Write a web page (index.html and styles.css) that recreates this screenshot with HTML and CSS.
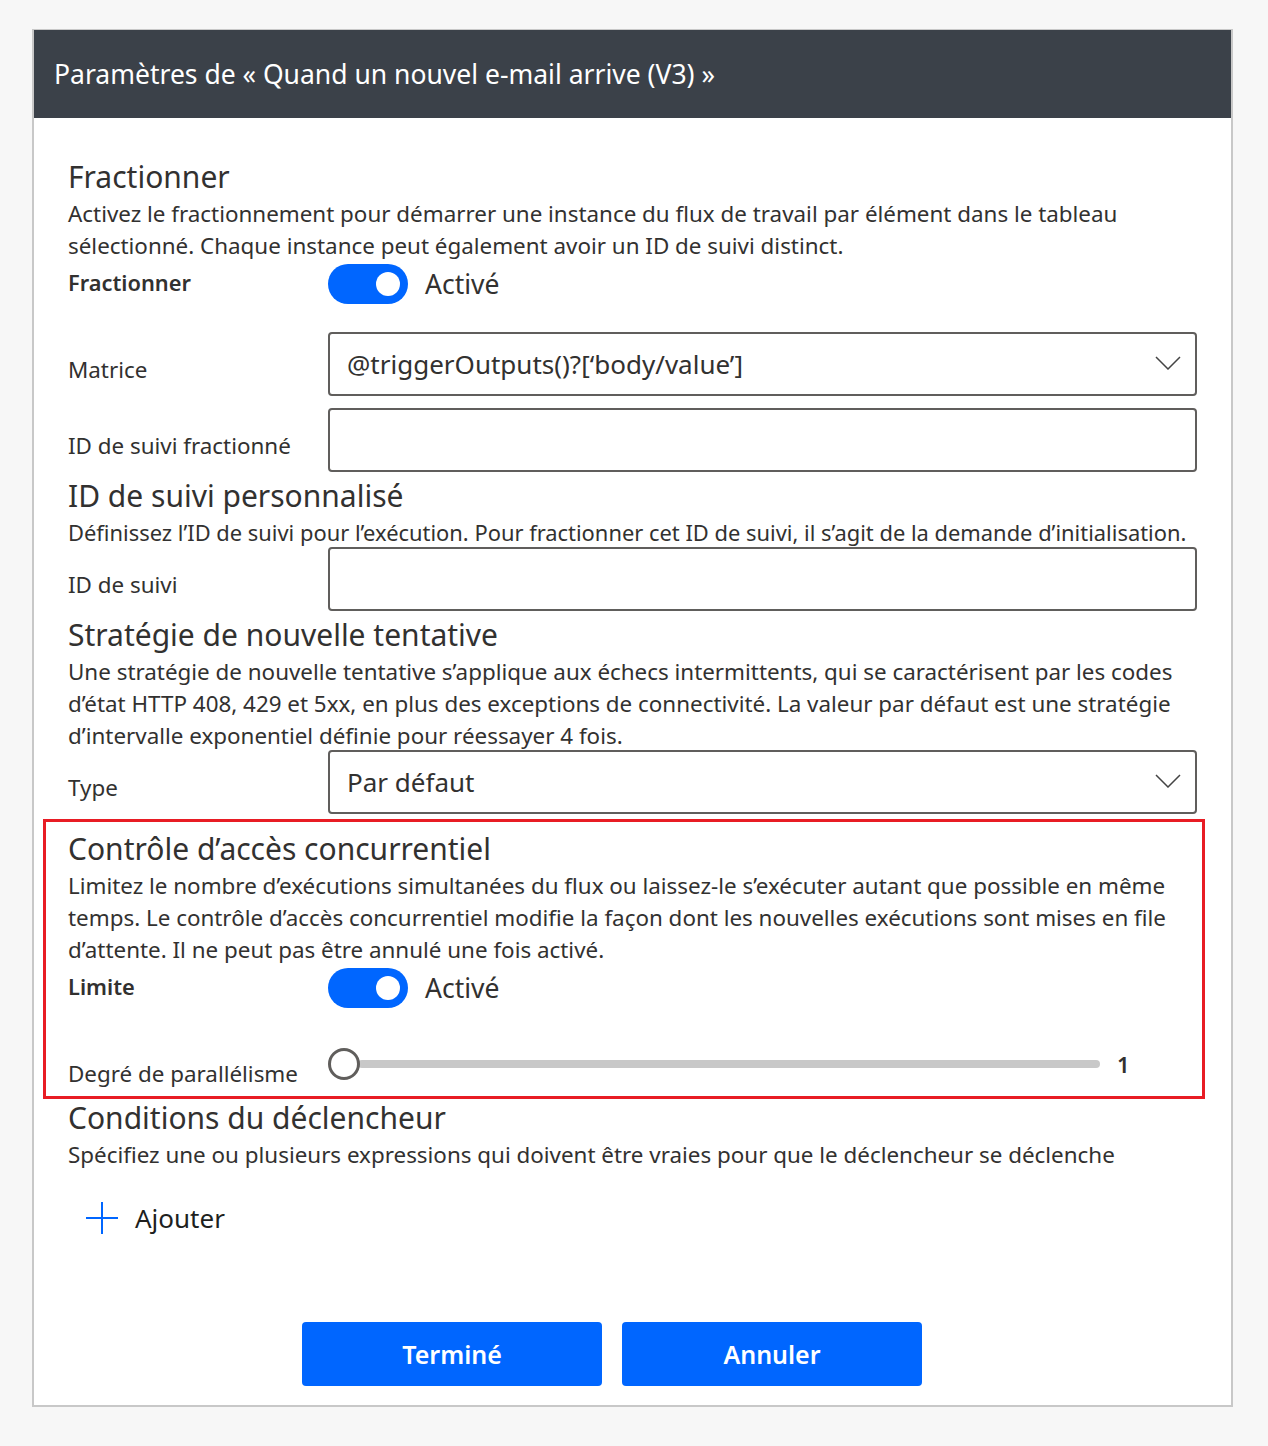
FILE: index.html
```html
<!DOCTYPE html>
<html lang="fr">
<head>
<meta charset="utf-8">
<title>Paramètres</title>
<link rel="stylesheet" href="styles.css">
</head>
<body>
<div class="panel">
  <div class="header">Paramètres de « Quand un nouvel e-mail arrive (V3) »</div>
  <div class="content">
    <div class="title t-first">Fractionner</div>
    <div class="desc">Activez le fractionnement pour démarrer une instance du flux de travail par élément dans le tableau<br>sélectionné. Chaque instance peut également avoir un ID de suivi distinct.</div>
    <div class="row row-toggle">
      <div class="label label-strong">Fractionner</div>
      <div class="toggle"><span class="knob"></span></div>
      <span class="toggle-text">Activé</span>
    </div>
    <div class="row row-input r-matrice">
      <div class="label label-low">Matrice</div>
      <div class="field">
        <span class="field-text">@triggerOutputs()?[‘body/value’]</span>
        <svg class="chev" width="26" height="14" viewBox="0 0 26 14"><path d="M1 1 L13 13 L25 1" fill="none" stroke="#444" stroke-width="1.5"/></svg>
      </div>
    </div>
    <div class="row row-input r-next">
      <div class="label label-low">ID de suivi fractionné</div>
      <div class="field"></div>
    </div>
    <div class="title t-mid">ID de suivi personnalisé</div>
    <div class="desc desc-tight">Définissez l’ID de suivi pour l’exécution. Pour fractionner cet ID de suivi, il s’agit de la demande d’initialisation.</div>
    <div class="row row-input r-after-desc">
      <div class="label label-low">ID de suivi</div>
      <div class="field"></div>
    </div>
    <div class="title t-mid">Stratégie de nouvelle tentative</div>
    <div class="desc">Une stratégie de nouvelle tentative s’applique aux échecs intermittents, qui se caractérisent par les codes<br>d’état HTTP 408, 429 et 5xx, en plus des exceptions de connectivité. La valeur par défaut est une stratégie<br>d’intervalle exponentiel définie pour réessayer 4 fois.</div>
    <div class="row row-input r-after-desc">
      <div class="label label-low">Type</div>
      <div class="field">
        <span class="field-text">Par défaut</span>
        <svg class="chev" width="26" height="14" viewBox="0 0 26 14"><path d="M1 1 L13 13 L25 1" fill="none" stroke="#444" stroke-width="1.5"/></svg>
      </div>
    </div>
    <div class="highlight">
      <div class="title t-box">Contrôle d’accès concurrentiel</div>
      <div class="desc">Limitez le nombre d’exécutions simultanées du flux ou laissez-le s’exécuter autant que possible en même<br>temps. Le contrôle d’accès concurrentiel modifie la façon dont les nouvelles exécutions sont mises en file<br>d’attente. Il ne peut pas être annulé une fois activé.</div>
      <div class="row row-toggle">
        <div class="label label-strong">Limite</div>
        <div class="toggle"><span class="knob"></span></div>
        <span class="toggle-text">Activé</span>
      </div>
      <div class="row row-slider">
        <div class="label label-slider">Degré de parallélisme</div>
        <div class="slider">
          <span class="thumb"></span>
          <span class="track"></span>
        </div>
        <span class="slider-value">1</span>
      </div>
    </div>
    <div class="title t-after-box">Conditions du déclencheur</div>
    <div class="desc">Spécifiez une ou plusieurs expressions qui doivent être vraies pour que le déclencheur se déclenche</div>
    <div class="add">
      <svg width="34" height="34" viewBox="0 0 34 34"><path d="M17 1 V33 M1 17 H33" stroke="#0066ff" stroke-width="2" fill="none"/></svg>
      <span class="add-text">Ajouter</span>
    </div>
    <div class="actions">
      <button class="btn">Terminé</button>
      <button class="btn">Annuler</button>
    </div>
  </div>
</div>
</body>
</html>
```
FILE: styles.css
```css
* { box-sizing: border-box; }
html, body { margin: 0; padding: 0; }
body {
  background: #f7f7f7;
  font-family: "Noto Sans", "Open Sans", sans-serif;
  color: #323130;
  padding: 29px 0 0 32px;
  height: 1446px;
}
.panel {
  width: 1201px;
  border: 2px solid #c8c8c8;
  background: #fff;
}
.header {
  height: 88px;
  background: #3b4149;
  color: #fff;
  font-size: 26.5px;
  line-height: 88px;
  padding-left: 20px;
  margin: -1px 0 0 0;
  white-space: nowrap;
}
.content {
  padding: 0 34px 19px 34px;
}
.title {
  font-size: 30px;
  line-height: 36px;
  color: #323130;
  white-space: nowrap;
}
.t-first { margin-top: 41px; }
.t-mid { margin-top: 6px; }
.t-box { margin-top: 9px; }
.t-after-box { margin-top: 1px; }
.desc {
  font-size: 22.4px;
  line-height: 32px;
  margin-top: 3px;
  white-space: nowrap;
}
.desc-tight { font-size: 21.9px; }
.row {
  display: flex;
  align-items: center;
}
.label {
  width: 260px;
  flex: none;
  font-size: 22.4px;
  white-space: nowrap;
}
.label-strong { font-weight: 600; font-size: 21.8px; padding-bottom: 4px; }
.label-low { padding-top: 11px; }
.row-toggle { margin-top: 2px; height: 40px; }
.toggle {
  width: 80px;
  height: 40px;
  border-radius: 20px;
  background: #0066ff;
  position: relative;
  flex: none;
}
.knob {
  position: absolute;
  width: 24px;
  height: 24px;
  border-radius: 50%;
  background: #fff;
  top: 8px;
  right: 8px;
}
.toggle-text {
  font-size: 26.5px;
  margin-left: 17px;
}
.row-input { height: 64px; }
.r-matrice { margin-top: 28px; }
.r-next { margin-top: 12px; }
.r-after-desc { margin-top: -2px; }
.field {
  flex: 1;
  height: 64px;
  border: 2px solid #605e5c;
  border-radius: 4px;
  display: flex;
  align-items: center;
  justify-content: space-between;
  padding: 0 14px 0 17px;
}
.field-text { font-size: 26px; white-space: nowrap; }
.chev { margin-top: -3px; }
.highlight {
  border: 3px solid #e81c24;
  margin: 5px -8px 0 -25px;
  padding: 0 5px 0 22px;
  height: 280px;
}
.row-slider { margin-top: 30px; height: 52px; }
.label-slider { padding-top: 18px; }
.slider {
  display: flex;
  align-items: center;
  width: 772px;
  flex: none;
}
.thumb {
  width: 32px;
  height: 32px;
  border: 3px solid #605e5c;
  border-radius: 50%;
  background: #fff;
  flex: none;
  position: relative;
  z-index: 1;
}
.track {
  flex: 1;
  height: 8px;
  background: #c8c8c8;
  border-radius: 4px;
  margin-left: -2px;
}
.slider-value {
  font-size: 22px;
  font-weight: 600;
  margin-left: 17px;
  color: #323130;
}
.add {
  display: flex;
  align-items: center;
  margin: 25px 0 0 17px;
  height: 44px;
}
.add-text { font-size: 26px; margin-left: 16px; color: #201f1e; }
.actions {
  display: flex;
  gap: 20px;
  margin: 82px 0 0 234px;
}
.btn {
  width: 300px;
  height: 64px;
  border: none;
  border-radius: 4px;
  background: #0066ff;
  color: #fff;
  font-family: "Noto Sans", "Open Sans", sans-serif;
  font-size: 25px;
  font-weight: 600;
}
```
